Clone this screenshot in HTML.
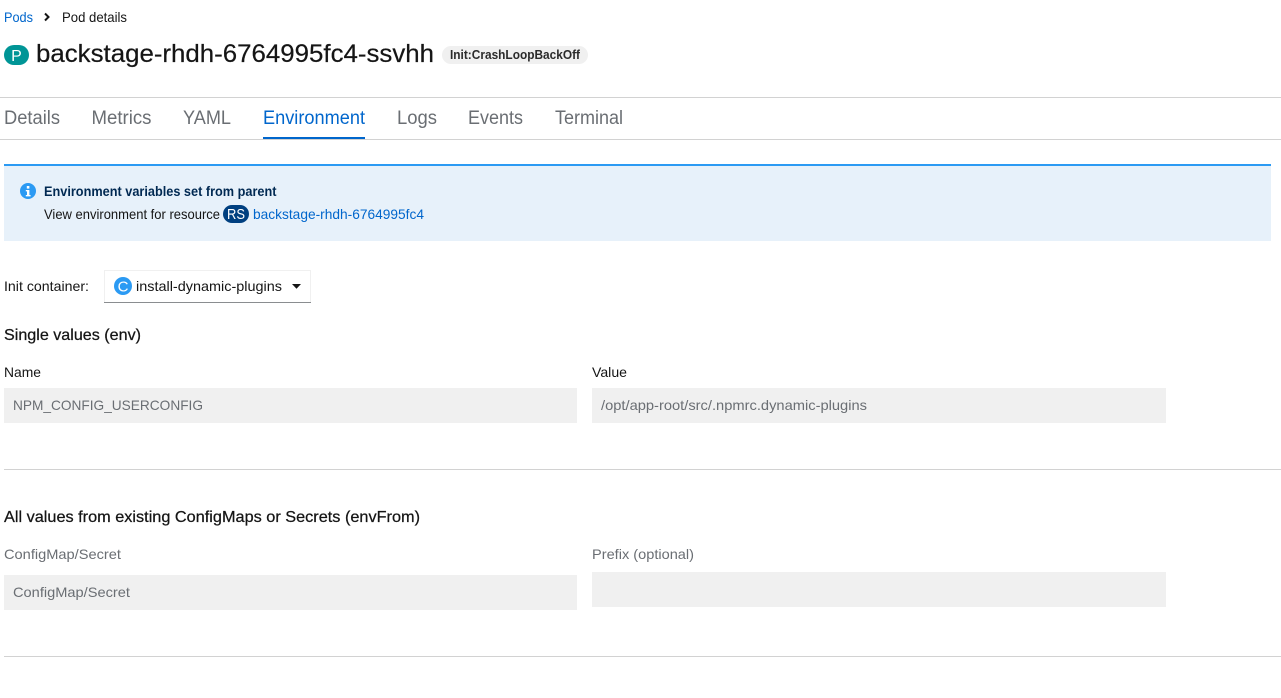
<!DOCTYPE html>
<html><head><meta charset="utf-8"><style>
html,body{margin:0;padding:0;background:#fff;width:1281px;height:698px;overflow:hidden}
svg{display:block}
text{font-family:"Liberation Sans",sans-serif;white-space:pre}
</style></head><body>
<svg width="1281" height="698" viewBox="0 0 1281 698" xmlns="http://www.w3.org/2000/svg">
<text x="4" y="22" font-size="14" fill="#0066cc" textLength="29" lengthAdjust="spacingAndGlyphs">Pods</text>
<path d="M45 13.500l3.500 3.500-3.500 3.500" fill="none" stroke="#151515" stroke-width="2"/>
<text x="62" y="22" font-size="14" fill="#151515" textLength="65" lengthAdjust="spacingAndGlyphs">Pod details</text>

<rect x="4" y="45" width="25" height="20" rx="10" fill="#009596"/>
<text x="16.500" y="61" font-size="16" fill="#fff" text-anchor="middle">P</text>
<text x="36" y="62" font-size="25" fill="#151515" stroke="#151515" stroke-width=".2" textLength="398" lengthAdjust="spacingAndGlyphs">backstage-rhdh-6764995fc4-ssvhh</text>
<rect x="442" y="46" width="146" height="18" rx="9" fill="#f0f0f0"/>
<text x="450" y="59" font-size="12.500" font-weight="bold" fill="#2b2b2b" textLength="130" lengthAdjust="spacingAndGlyphs">Init:CrashLoopBackOff</text>

<rect x="0" y="97" width="1281" height="1" fill="#d2d2d2"/>
<rect x="0" y="139" width="1281" height="1" fill="#d2d2d2"/>
<g font-size="19" fill="#6a6e73">
<text x="4" y="124" textLength="56" lengthAdjust="spacingAndGlyphs">Details</text>
<text x="91.500" y="124" textLength="60" lengthAdjust="spacingAndGlyphs">Metrics</text>
<text x="183" y="124" textLength="48" lengthAdjust="spacingAndGlyphs">YAML</text>
<text x="263" y="124" textLength="102" lengthAdjust="spacingAndGlyphs" fill="#0066cc">Environment</text>
<text x="397" y="124" textLength="40" lengthAdjust="spacingAndGlyphs">Logs</text>
<text x="468" y="124" textLength="55" lengthAdjust="spacingAndGlyphs">Events</text>
<text x="555" y="124" textLength="68" lengthAdjust="spacingAndGlyphs">Terminal</text>
</g>
<rect x="263" y="137" width="102" height="2" fill="#0066cc"/>

<rect x="4" y="164" width="1267" height="77" fill="#e7f1fa"/>
<rect x="4" y="164" width="1267" height="2" fill="#2b9af3"/>
<circle cx="28" cy="191" r="8" fill="#2b9af3"/>
<rect x="26.800" y="186" width="2.600" height="2.600" fill="#fff"/>
<path d="M25.800 190h3.600v5h1.200v1.400h-4.800V195h1.200v-3.600h-1.200z" fill="#fff"/>
<text x="44" y="196" font-size="13.500" font-weight="bold" fill="#002952" textLength="232.500" lengthAdjust="spacingAndGlyphs">Environment variables set from parent</text>
<text x="44" y="219" font-size="14" fill="#151515" textLength="176" lengthAdjust="spacingAndGlyphs">View environment for resource</text>
<rect x="223" y="205" width="26" height="18" rx="9" fill="#004080"/>
<text x="236" y="219" font-size="14.500" fill="#fff" text-anchor="middle" textLength="18" lengthAdjust="spacingAndGlyphs">RS</text>
<text x="253" y="219" font-size="14" fill="#0066cc" textLength="171" lengthAdjust="spacingAndGlyphs">backstage-rhdh-6764995fc4</text>

<text x="4" y="291" font-size="14" fill="#151515" textLength="85" lengthAdjust="spacingAndGlyphs">Init container:</text>
<rect x="104.500" y="270.500" width="206" height="32" fill="#fff" stroke="#f0f0f0"/>
<rect x="104" y="302" width="207" height="1" fill="#8a8d90"/>
<circle cx="123" cy="286" r="9" fill="#2b9af3"/>
<text x="123" y="291.500" font-size="15" fill="#fff" text-anchor="middle">C</text>
<text x="136" y="291" font-size="14" fill="#151515" textLength="146" lengthAdjust="spacingAndGlyphs">install-dynamic-plugins</text>
<path d="M292 284h9l-4.500 4.800z" fill="#151515"/>

<text x="4" y="340" font-size="16" fill="#151515" stroke="#151515" stroke-width=".25" textLength="137" lengthAdjust="spacingAndGlyphs">Single values (env)</text>
<text x="4" y="377" font-size="14" fill="#151515" textLength="37" lengthAdjust="spacingAndGlyphs">Name</text>
<text x="592" y="377" font-size="14" fill="#151515" textLength="35" lengthAdjust="spacingAndGlyphs">Value</text>
<rect x="4" y="388" width="573" height="35" fill="#f0f0f0"/>
<rect x="592" y="388" width="574" height="35" fill="#f0f0f0"/>
<text x="13" y="410" font-size="14" fill="#6a6e73" textLength="190" lengthAdjust="spacingAndGlyphs">NPM_CONFIG_USERCONFIG</text>
<text x="601" y="410" font-size="14" fill="#6a6e73" textLength="266" lengthAdjust="spacingAndGlyphs">/opt/app-root/src/.npmrc.dynamic-plugins</text>

<rect x="4" y="469" width="1277" height="1" fill="#d2d2d2"/>

<text x="4" y="522" font-size="16" fill="#151515" stroke="#151515" stroke-width=".25" textLength="416" lengthAdjust="spacingAndGlyphs">All values from existing ConfigMaps or Secrets (envFrom)</text>
<text x="4" y="559" font-size="14" fill="#6a6e73" textLength="117" lengthAdjust="spacingAndGlyphs">ConfigMap/Secret</text>
<text x="592" y="559" font-size="14" fill="#6a6e73" textLength="102" lengthAdjust="spacingAndGlyphs">Prefix (optional)</text>
<rect x="4" y="575" width="573" height="35" fill="#f0f0f0"/>
<rect x="592" y="572" width="574" height="35" fill="#f0f0f0"/>
<text x="13" y="597" font-size="14" fill="#6a6e73" textLength="117" lengthAdjust="spacingAndGlyphs">ConfigMap/Secret</text>

<rect x="4" y="656" width="1277" height="1" fill="#d2d2d2"/>
</svg>
</body></html>
